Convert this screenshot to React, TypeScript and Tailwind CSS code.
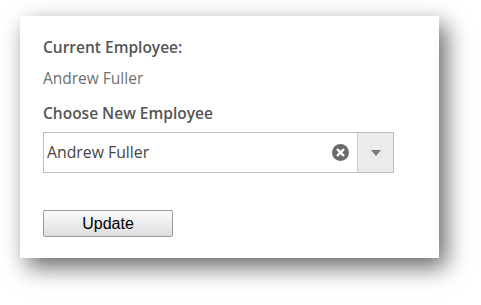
import { FC } from "react";

const ClearIcon: FC = () => (
  <svg width="17" height="17" viewBox="0 0 16 16">
    <circle cx="8" cy="8" r="8" fill="#6b6b6b" />
    <path d="M5.3 5.3 L10.7 10.7 M10.7 5.3 L5.3 10.7" stroke="#fff" strokeWidth="2.2" strokeLinecap="round" />
  </svg>
);

const App: FC = () => {
  return (
    <div className="h-[305px] w-[481px] overflow-hidden bg-white pl-[20px] pt-[16px]">
      <div
        className="flex h-[242px] w-[419px] flex-col bg-white pl-[23px] pt-[21px] shadow-[7px_9px_22px_rgba(0,0,0,0.6)]"
        style={{ fontFamily: '"Open Sans", "Noto Sans", sans-serif' }}
      >
        <div className="text-[15.5px] font-semibold leading-5 text-[#555]">
          Current Employee:
        </div>
        <div className="mt-[11px] text-[15.5px] leading-5 text-[#707070]">
          Andrew Fuller
        </div>
        <div className="mt-[15px] text-[15.5px] font-semibold leading-5 text-[#555]">
          Choose New Employee
        </div>
        <div className="mt-[9px] flex h-[41px] w-[351px] items-stretch border border-[#bdbdbd] bg-white">
          <div className="flex flex-1 items-center pl-[3px] text-[15.8px] text-[#444]">
            Andrew Fuller
          </div>
          <div className="flex w-[34px] items-center justify-center">
            <ClearIcon />
          </div>
          <div className="flex w-[36px] items-center justify-center border-l border-[#d0d0d0] bg-[#ebebeb]">
            <svg width="10" height="6" viewBox="0 0 10 6">
              <path d="M0 0 H10 L5 6 Z" fill="#7a7a7a" />
            </svg>
          </div>
        </div>
        <button
          className="mt-[37px] h-[27px] w-[130px] rounded-[2px] border border-[#9a9a9a] bg-gradient-to-b from-[#fafafa] to-[#dedede] text-[16px] text-black"
          style={{ fontFamily: '"Liberation Sans", Arial, sans-serif' }}
        >
          Update
        </button>
      </div>
    </div>
  );
};

export default App;
